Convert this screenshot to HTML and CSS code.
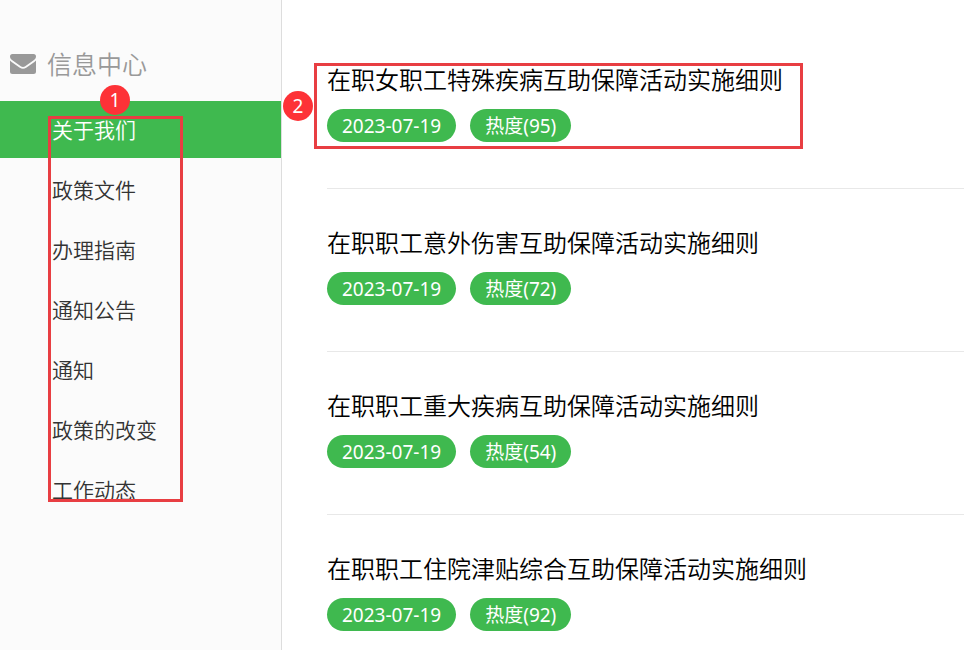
FILE: index.html
```html
<!DOCTYPE html>
<html lang="zh-CN">
<head>
    <meta charset="UTF-8">
    <meta name="viewport" content="width=device-width, initial-scale=1.0">
    <title>信息中心</title>
    <link rel="stylesheet" href="styles.css">
</head>
<body>
    <div class="page">
        <aside class="sidebar">
            <h2 class="sidebar-title">
                <svg class="mail-icon" viewBox="0 0 26 20" aria-hidden="true">
                    <path d="M2.5 0h21A2.500 2.500 0 0 1 26 2.500c0 1.500-.8 2.700-2 3.600L15.200 12.300c-1.400 1-3 1-4.400 0L2 6.100C.8 5.200 0 4 0 2.500A2.500 2.500 0 0 1 2.500 0z"/>
                    <path d="M0 6.600c.5.500 1 .9 1.600 1.300l8.200 5.900c2 1.400 4.400 1.400 6.400 0l8.200-5.900c.6-.4 1.100-.8 1.600-1.300v10.900a2.500 2.500 0 0 1-2.500 2.500h-21A2.500 2.500 0 0 1 0 17.500z"/>
                </svg>
                信息中心
            </h2>
            <nav class="menu">
                <a class="active" href="#">关于我们</a>
                <a href="#">政策文件</a>
                <a href="#">办理指南</a>
                <a href="#">通知公告</a>
                <a href="#">通知</a>
                <a href="#">政策的改变</a>
                <a href="#">工作动态</a>
                <div class="mark mark-menu"><span class="mark-num">1</span></div>
            </nav>
        </aside>
        <main class="content">
            <article class="item">
                <h3><a href="#">在职女职工特殊疾病互助保障活动实施细则</a></h3>
                <div class="tags">
                    <span class="tag">2023-07-19</span>
                    <span class="tag">热度(95)</span>
                </div>
                <div class="mark mark-item"><span class="mark-num">2</span></div>
            </article>
            <article class="item">
                <h3><a href="#">在职职工意外伤害互助保障活动实施细则</a></h3>
                <div class="tags">
                    <span class="tag">2023-07-19</span>
                    <span class="tag">热度(72)</span>
                </div>
            </article>
            <article class="item">
                <h3><a href="#">在职职工重大疾病互助保障活动实施细则</a></h3>
                <div class="tags">
                    <span class="tag">2023-07-19</span>
                    <span class="tag">热度(54)</span>
                </div>
            </article>
            <article class="item">
                <h3><a href="#">在职职工住院津贴综合互助保障活动实施细则</a></h3>
                <div class="tags">
                    <span class="tag">2023-07-19</span>
                    <span class="tag">热度(92)</span>
                </div>
            </article>
        </main>
    </div>
</body>
</html>
```
FILE: styles.css
```css
* {
    box-sizing: border-box;
}
body {
    margin: 0;
    font-family: "Noto Sans", "Noto Sans CJK SC", sans-serif;
    background-color: #fff;
    color: #333;
}
a {
    color: inherit;
    text-decoration: none;
}
.page {
    display: flex;
    min-height: 100vh;
}

/* left menu */
.sidebar {
    flex: 0 0 282px;
    padding-top: 44px;
    background-color: #fbfbfb;
    border-right: 1px solid #ddd;
}
.sidebar-title {
    display: flex;
    align-items: center;
    gap: 11px;
    margin: 0 0 17px;
    padding-left: 10px;
    font-size: 25px;
    font-weight: 350;
    line-height: 40px;
    color: #999;
}
.mail-icon {
    width: 26px;
    height: 20px;
    fill: #999;
}
.menu {
    position: relative;
    display: flex;
    flex-direction: column;
    gap: 3px;
}
.menu a {
    padding: 2px 0 0 52px;
    font-size: 21px;
    font-weight: 350;
    line-height: 55px;
}
.menu a.active {
    background-color: #3fb94f;
    color: #fff;
}

/* article list */
.content {
    flex: 1;
    padding: 26px 0 0 45px;
}
.item {
    position: relative;
    padding: 36px 0 46px;
    border-bottom: 1px solid #e8e8e8;
}
.item:last-child {
    padding-bottom: 16px;
    border-bottom: none;
}
.item h3 {
    margin: 0 0 11px;
    font-size: 24px;
    font-weight: 350;
    line-height: 36px;
    color: #000;
}
.tags {
    display: flex;
    gap: 14px;
}
.tag {
    padding: 2px 15px 0;
    border-radius: 17px;
    background-color: #3fb94f;
    color: #fff;
    font-size: 19px;
    line-height: 31px;
}

/* numbered red frames */
.mark {
    position: absolute;
    border: 3px solid #e83e42;
    pointer-events: none;
}
.mark-num {
    position: absolute;
    width: 30px;
    height: 30px;
    border-radius: 50%;
    background-color: #fd3237;
    color: #fff;
    font-size: 19px;
    line-height: 30px;
    text-align: center;
}
.mark-menu {
    top: 15px;
    left: 48px;
    width: 135px;
    height: 386px;
}
.mark-menu .mark-num {
    top: -34px;
    left: 49px;
}
.mark-item {
    top: 37px;
    left: -13px;
    width: 489px;
    height: 86px;
}
.mark-item .mark-num {
    top: 25px;
    left: -34px;
}
```
